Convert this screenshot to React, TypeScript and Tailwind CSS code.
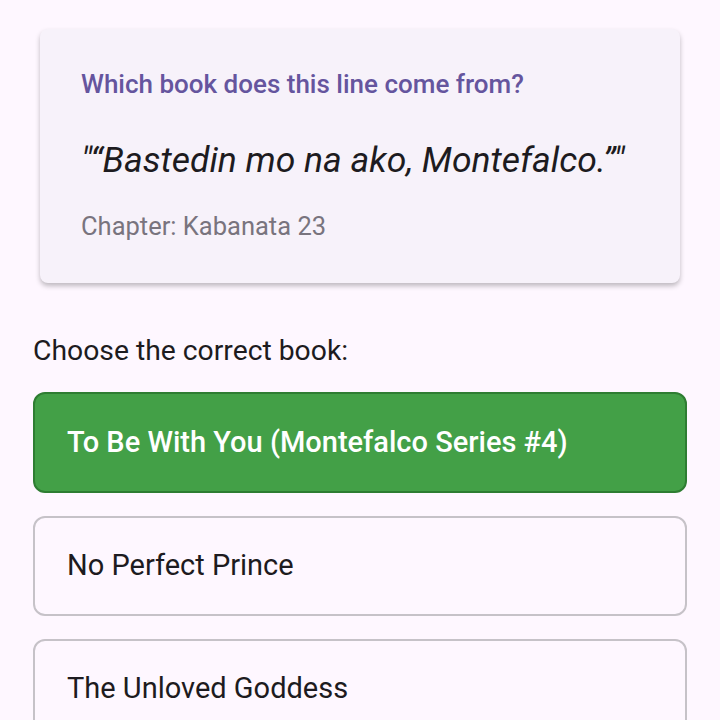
const options = [
  { title: "To Be With You (Montefalco Series #4)", correct: true },
  { title: "No Perfect Prince", correct: false },
  { title: "The Unloved Goddess", correct: false },
]

export default function App() {
  return (
    <div className="min-h-screen bg-[#fef7ff] px-[33px] pt-[29px] font-['Roboto',sans-serif]">
      {/* Quote card */}
      <div className="mx-[7px] rounded-[8px] bg-[#f7f2fa] px-[41px] pt-[39px] pb-[41px] shadow-[0_3px_5px_rgba(0,0,0,0.25)]">
        <h2 className="text-[26px] leading-[32px] font-medium text-[#65559e]">
          Which book does this line come from?
        </h2>
        <p className="mt-[38px] text-[35.5px] leading-[44px] text-[#1d1b20] italic">
          "“Bastedin mo na ako, Montefalco.”"
        </p>
        <p className="mt-[28px] text-[25.5px] leading-[32px] text-[#79747e]">
          Chapter: Kabanata 23
        </p>
      </div>

      <p className="mt-[50px] text-[28.3px] leading-[36px] text-[#1d1b20]">
        Choose the correct book:
      </p>

      <div className="mt-[23px] flex flex-col gap-[23px]">
        {options.map((o) =>
          o.correct ? (
            <button
              key={o.title}
              className="flex h-[101px] w-full items-center rounded-[12px] border-2 border-[#2e7d32] bg-[#43a047] px-[32px] text-left text-[29px] font-medium text-white"
            >
              {o.title}
            </button>
          ) : (
            <button
              key={o.title}
              className="flex h-[100px] w-full items-center rounded-[12px] border-2 border-[#c6c2c8] px-[32px] text-left text-[29px] text-[#1d1b20]"
            >
              {o.title}
            </button>
          )
        )}
      </div>
    </div>
  )
}
